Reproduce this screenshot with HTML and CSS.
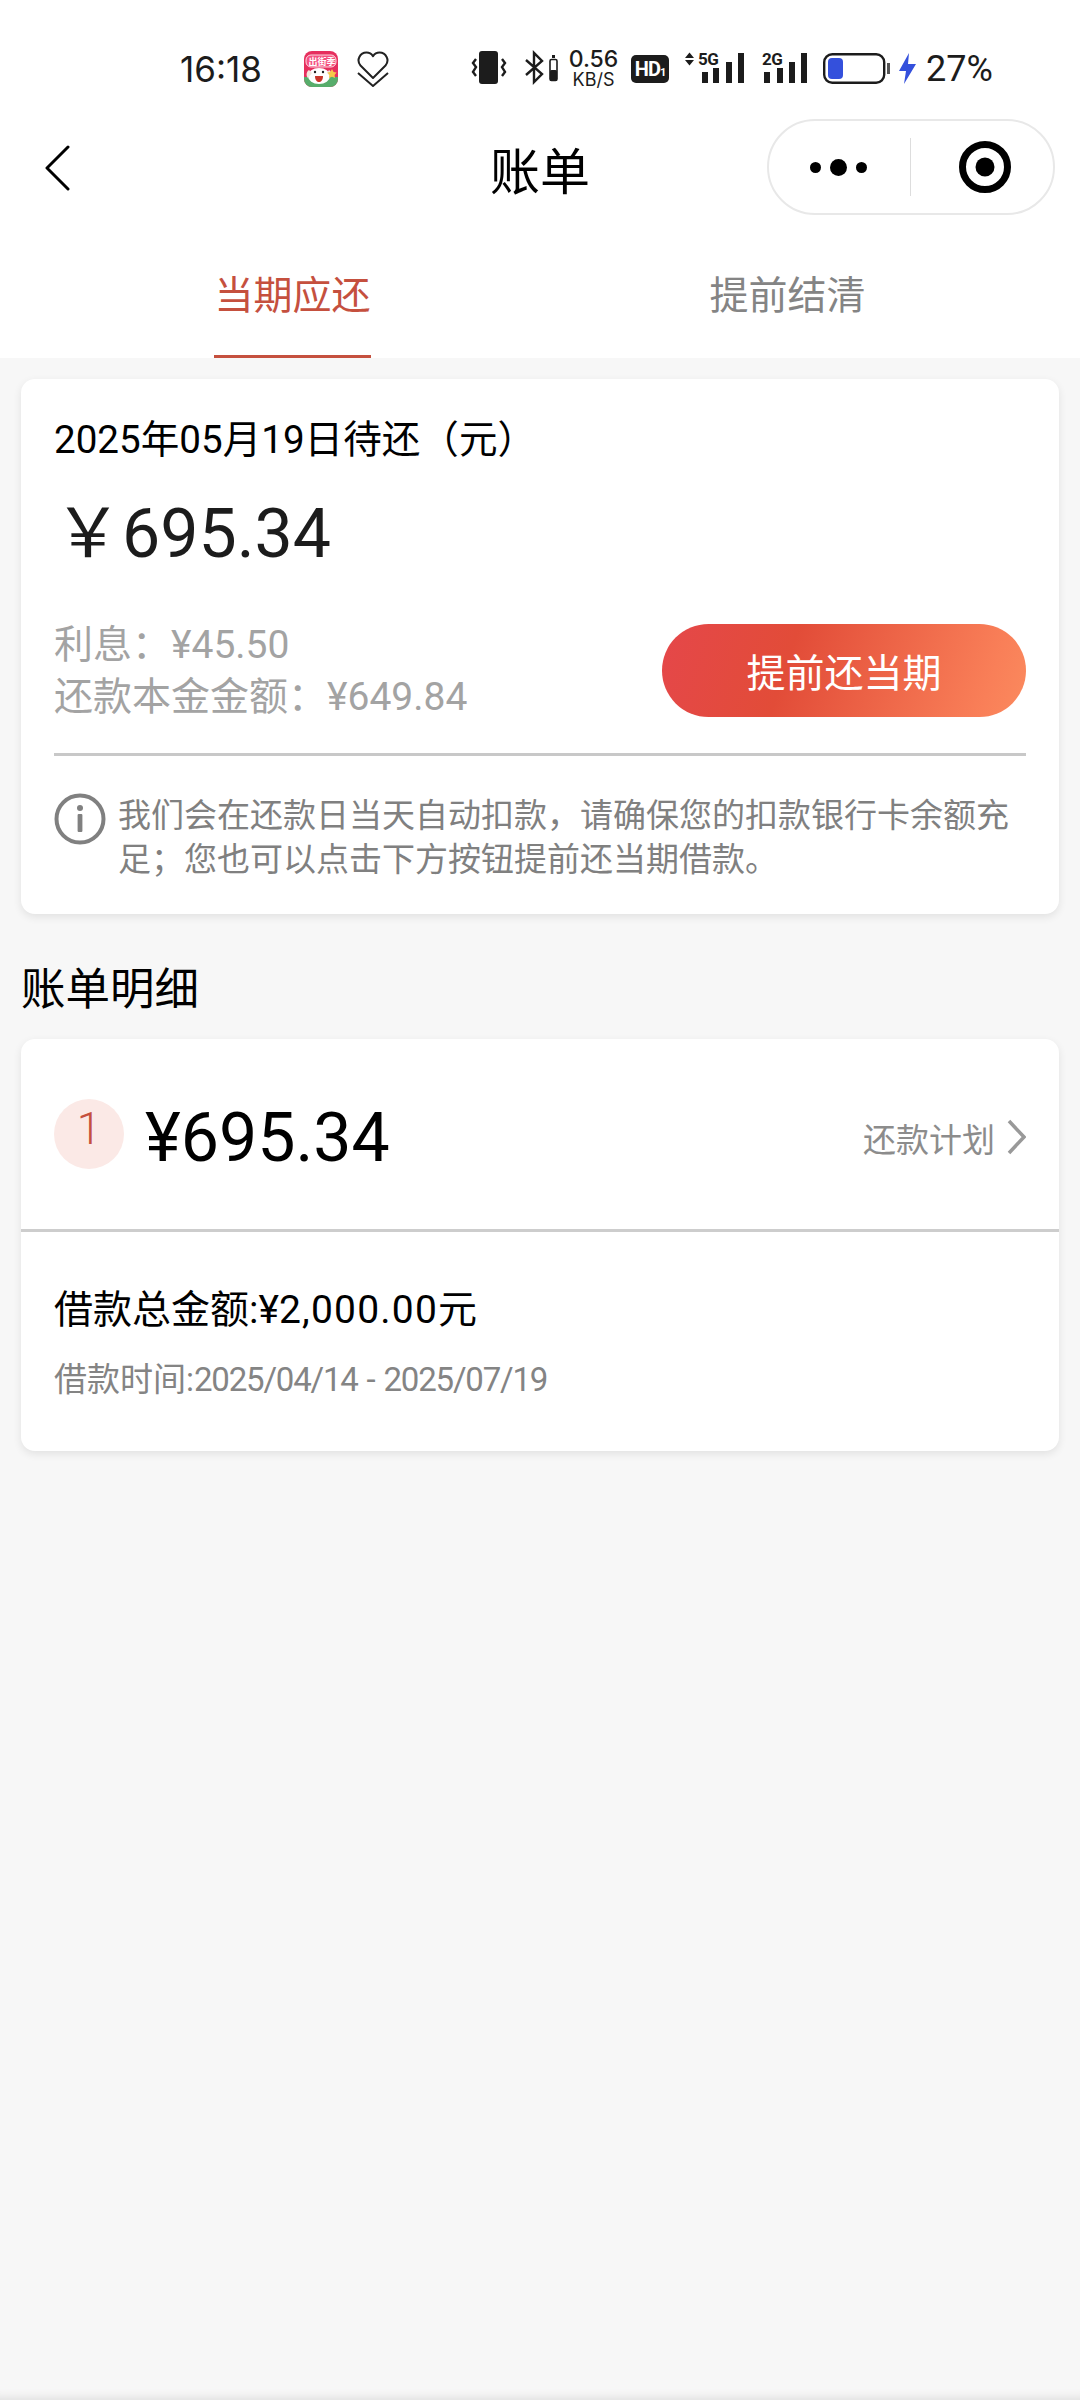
FILE: index.html
```html
<!DOCTYPE html>
<html lang="zh-CN">
	<head>
		<meta charset="UTF-8" />
		<title>账单</title>
		<link rel="stylesheet" href="styles.css">
	</head>
	<body>
		<header class="top">
			<div class="status">
				<span class="time">16:18</span>
				<svg class="app-icon" width="34" height="36" viewBox="0 0 34 36">
					<rect width="34" height="36" rx="8" fill="#e62f5e"/>
					<path d="M0 26h34v2a8 8 0 0 1-8 8H8a8 8 0 0 1-8-8z" fill="#57ad6b"/>
					<rect x="2" y="4" width="30" height="12" rx="5" fill="#f4517f" stroke="#fff" stroke-width=".8"/>
					<text x="4.5" y="13.5" class="app-text">出街季</text>
					<ellipse cx="15" cy="25" rx="11" ry="8" fill="#fff"/>
					<path d="M5 19c-3 2-3 6-1 8l4-5zM25 19c2 1 3 4 2 7l-4-4z" fill="#f3e6dc"/>
					<path d="M11 25h8c0 4-2 6-4 6s-4-2-4-6z" fill="#c9362b"/>
					<circle cx="11" cy="21" r="1.2" fill="#222"/>
					<circle cx="19" cy="21" r="1.2" fill="#222"/>
					<path d="M28 18l1.600 3 3 .6-2 2.400.4 3-3-1.200-3 1.200.4-3-2-2.400 3-.6z" fill="#f7c948"/>
				</svg>
				<svg class="heart" width="32" height="36" viewBox="0 0 32 36" fill="none" stroke="#222" stroke-width="2" stroke-linejoin="round">
					<path d="M16 27L3.500 14.500C-1 9 3 1.500 9.500 1.500c2.800 0 5 1.300 6.500 3.700 1.500-2.400 3.700-3.700 6.500-3.700C29 1.500 33 9 28.500 14.500z"/>
					<path d="M1 22l15 13 15-13"/>
				</svg>
				<span class="status-right">
					<svg class="s-vib" width="36" height="38" viewBox="0 0 36 38">
						<rect x="8" y="1" width="19" height="33" rx="3" fill="#1c1c1c"/>
						<path d="M5 9l-3 4 3 4-3 5 3 4M31 9l3 4-3 4 3 5-3 4" fill="none" stroke="#1c1c1c" stroke-width="2.400"/>
					</svg>
					<svg class="s-bt" width="33" height="38" viewBox="0 0 33 38">
						<path d="M1 10l16 14-8 8V3l8 8L1 25" fill="none" stroke="#1c1c1c" stroke-width="2.400"/>
						<rect x="25" y="9.500" width="7" height="21" rx="1.500" fill="none" stroke="#1c1c1c" stroke-width="1.600"/>
						<rect x="27" y="5" width="3" height="3" fill="#1c1c1c"/>
						<rect x="25" y="20" width="7" height="11" rx="1.500" fill="#1c1c1c"/>
					</svg>
					<span class="speed"><b>0.56</b><i>KB/S</i></span>
					<span class="hd">HD<small>1</small></span>
					<svg class="s-5g" width="60" height="38" viewBox="0 0 60 38">
						<path d="M1 8l4.500-5.500L10 8zM1 10l4.500 5.500L10 10z" fill="#1c1c1c"/>
						<text x="14" y="15" class="sig-text">5G</text>
						<rect x="18" y="22" width="6" height="11" fill="#1c1c1c"/>
						<rect x="29" y="18" width="6" height="15" fill="#1c1c1c"/>
						<rect x="42" y="12" width="6" height="21" fill="#1c1c1c"/>
						<rect x="54" y="3" width="6" height="30" fill="#1c1c1c"/>
					</svg>
					<svg class="s-2g" width="45" height="38" viewBox="0 0 45 38">
						<text x="0" y="15" class="sig-text">2G</text>
						<rect x="2" y="22" width="6" height="11" fill="#1c1c1c"/>
						<rect x="15" y="18" width="6" height="15" fill="#1c1c1c"/>
						<rect x="27" y="12" width="6" height="21" fill="#1c1c1c"/>
						<rect x="39" y="3" width="6" height="30" fill="#1c1c1c"/>
					</svg>
					<svg class="s-bat" width="67" height="38" viewBox="0 0 67 38">
						<rect x="1.200" y="4.200" width="60" height="28.600" rx="8" fill="none" stroke="#1c1c1c" stroke-width="2.400"/>
						<rect x="5" y="8" width="15" height="21" rx="4" fill="#3450dc"/>
						<rect x="64" y="13" width="3" height="11" fill="#555"/>
					</svg>
					<svg class="s-bolt" width="18" height="38" viewBox="0 0 18 38">
						<path d="M11 3L1 21h7L6 34l12-20h-8z" fill="#3450dc"/>
					</svg>
					<span class="pct">27%</span>
				</span>
			</div>
			<nav class="nav">
				<svg class="back" width="26" height="46" viewBox="0 0 26 46" fill="none" stroke="#000" stroke-width="3" stroke-linecap="round" stroke-linejoin="round">
					<path d="M24 2L3 23l21 21"/>
				</svg>
				<h1>账单</h1>
				<div class="capsule">
					<span class="dots"><i></i><i class="mid"></i><i></i></span>
					<span class="capsule-line"></span>
					<svg width="52" height="52" viewBox="0 0 52 52">
						<circle cx="26" cy="26" r="22.500" fill="none" stroke="#000" stroke-width="7"/>
						<circle cx="26" cy="26" r="9.500" fill="#000"/>
					</svg>
				</div>
			</nav>
			<div class="tabs">
				<div class="tab on"><span>当期应还</span></div>
				<div class="tab"><span>提前结清</span></div>
			</div>
		</header>

		<main class="content">
			<section class="card due">
				<div class="due-title">2025年05月19日待还（元）</div>
				<div class="due-amount">￥695.34</div>
				<div class="due-row">
					<div class="due-detail">
						<div>利息：¥45.50</div>
						<div>还款本金金额：¥649.84</div>
					</div>
					<button class="pay">提前还当期</button>
				</div>
				<div class="notice">
					<svg class="info" width="52" height="52" viewBox="0 0 52 52">
						<circle cx="26" cy="26" r="23.500" fill="none" stroke="#808080" stroke-width="4"/>
						<circle cx="26" cy="15" r="3" fill="#808080"/>
						<rect x="23.600" y="21" width="4.800" height="18" rx="1" fill="#808080"/>
					</svg>
					<p>我们会在还款日当天自动扣款，请确保您的扣款银行卡余额充足；您也可以点击下方按钮提前还当期借款。</p>
				</div>
			</section>

			<h2 class="section-title">账单明细</h2>

			<section class="card bill">
				<div class="bill-head">
					<span class="num">1</span>
					<span class="bill-amount">¥695.34</span>
					<span class="plan">还款计划</span>
					<svg class="chev" width="19" height="36" viewBox="0 0 19 36" fill="none" stroke="#999" stroke-width="3.500">
						<path d="M2 2l15 16L2 34"/>
					</svg>
				</div>
				<div class="bill-body">
					<div class="bill-total">借款总金额:¥<span class="wide">2,000.00</span>元</div>
					<div class="bill-time">借款时间:<span class="tight">2025/04/14 - 2025/07/19</span></div>
				</div>
			</section>
		</main>
	</body>
</html>
```

FILE: styles.css
```css
html, body {
	margin: 0;
	height: 100%;
}
body {
	height: 2400px;
	overflow: hidden;
	display: flex;
	flex-direction: column;
	background: #f7f7f7;
	font-family: "Roboto", "Noto Sans CJK SC", sans-serif;
	color: #000;
	box-shadow: inset 0 -12px 10px -10px #ddd;
}
.top {
	background: #fff;
	height: 358px;
	flex: none;
}

/* status bar */
.status {
	height: 120px;
	display: flex;
	align-items: center;
	padding: 18px 0 0 180px;
	box-sizing: border-box;
	color: #1c1c1c;
}
.time {
	font-family: "Inter", sans-serif;
	font-size: 35px;
	width: 124px;
}
.app-text {
	font-family: "Noto Sans CJK SC", sans-serif;
	font-size: 9px;
	font-weight: 700;
	fill: #fff;
}
.heart {
	margin-left: 19px;
}
.status-right {
	display: flex;
	align-items: center;
	margin-left: 82px;
}
.s-bt {
	margin-left: 18px;
}
.speed {
	display: flex;
	flex-direction: column;
	align-items: center;
	width: 49px;
	margin: -1px 0 0 11px;
	font-family: "Inter", sans-serif;
}
.speed b {
	font-weight: 500;
	font-size: 23px;
	line-height: 23px;
}
.speed i {
	font-style: normal;
	font-size: 18px;
	line-height: 18px;
}
.hd {
	background: #1c1c1c;
	color: #fff;
	font-size: 20px;
	font-weight: 700;
	width: 38px;
	height: 28px;
	line-height: 28px;
	margin-left: 13px;
	text-align: center;
	border-radius: 5px;
	letter-spacing: -1px;
}
.hd small {
	font-size: 11px;
}
.s-5g {
	margin-left: 15px;
}
.s-2g {
	margin-left: 18px;
}
.s-bat {
	margin-left: 16px;
}
.s-bolt {
	margin-left: 8px;
}
.sig-text {
	font-size: 17px;
	font-weight: 700;
	fill: #1c1c1c;
	letter-spacing: -0.5px;
}
.pct {
	font-size: 36px;
	margin-left: 10px;
}

/* title bar */
.nav {
	height: 96px;
	display: grid;
	grid-template-columns: 1fr auto 1fr;
	align-items: center;
}
.back {
	margin-left: 44px;
}
.nav h1 {
	margin: 0;
	font-size: 50px;
	font-weight: 400;
}
.capsule {
	justify-self: end;
	width: 288px;
	height: 96px;
	margin: -2px 25px 0 0;
	box-sizing: border-box;
	border: 2px solid #e8e8e8;
	border-radius: 48px;
	display: flex;
	align-items: center;
}
.dots {
	display: flex;
	align-items: center;
	gap: 9px;
	margin-left: 41px;
	width: 56px;
}
.dots i {
	flex: none;
	width: 11px;
	height: 11px;
	border-radius: 50%;
	background: #000;
}
.dots .mid {
	width: 17px;
	height: 17px;
}
.capsule-line {
	width: 1px;
	height: 58px;
	background: #ddd;
	margin-left: 44px;
}
.capsule svg {
	margin-left: 48px;
}

/* tabs */
.tabs {
	display: flex;
	height: 142px;
}
.tab {
	width: 405px;
	text-align: center;
	font-size: 39px;
	line-height: 46px;
	color: #848484;
}
.tab span {
	display: block;
	width: 157px;
	height: 142px;
	margin: 0 auto;
	padding-top: 57px;
	box-sizing: border-box;
	white-space: nowrap;
}
.tab.on {
	width: 585px;
	color: #c5503e;
}
.tab.on span {
	border-bottom: 3px solid #c5503e;
}

/* cards */
.content {
	padding: 21px 21px 0;
}
.card {
	background: #fff;
	border-radius: 14px;
	box-shadow: 0 3px 8px rgba(0, 0, 0, 0.09);
}
.due {
	height: 535px;
	box-sizing: border-box;
	padding: 37px 33px 0;
}
.due-title {
	font-size: 38.6px;
	line-height: 48px;
}
.due-amount {
	font-size: 68px;
	line-height: 80px;
	margin-top: 30px;
	color: #1c1c1c;
}
.due-row {
	display: flex;
	justify-content: space-between;
	align-items: center;
	margin-top: 43px;
	padding-bottom: 30px;
	border-bottom: 3px solid #c8c8c8;
}
.due-detail {
	padding-top: 2px;
	font-size: 39px;
	line-height: 52px;
	color: #a3a3a3;
}
.pay {
	width: 364px;
	height: 93px;
	border: none;
	border-radius: 47px;
	background: linear-gradient(108deg, #e5474a 0%, #e24c38 35%, #f97f58 88%, #fb8a5e 100%);
	color: #fff;
	font-family: inherit;
	font-size: 39px;
}
.notice {
	display: flex;
	margin-top: 38px;
}
.info {
	flex: none;
	margin-top: -1px;
}
.notice p {
	margin: 0 0 0 12px;
	font-size: 33px;
	line-height: 44px;
	color: #808080;
}
.section-title {
	margin: 48px 0 21px;
	font-size: 44.5px;
	line-height: 56px;
	font-weight: 400;
}
.bill {
	height: 412px;
}
.bill-head {
	height: 190px;
	display: flex;
	align-items: center;
	padding: 0 33px;
	border-bottom: 3px solid #cdcdcd;
}
.num {
	width: 70px;
	height: 70px;
	border-radius: 50%;
	background: #fbe9e6;
	color: #c5503e;
	font-size: 44px;
	font-weight: 300;
	line-height: 60px;
	text-align: center;
}
.bill-amount {
	font-size: 68px;
	margin: 8px 0 0 21px;
	flex: 1;
}
.plan {
	font-size: 33px;
	color: #8c8c8c;
	margin-top: 8px;
}
.chev {
	margin: 6px 0 0 12px;
}
.bill-body {
	padding: 53px 33px 0;
}
.bill-total {
	font-size: 39px;
	line-height: 50px;
}
.bill-total .wide {
	letter-spacing: 1.2px;
}
.bill-time {
	font-size: 33px;
	line-height: 44px;
	margin-top: 23px;
	color: #848484;
}
.bill-time .tight {
	letter-spacing: -1.2px;
	word-spacing: 2px;
}
```
